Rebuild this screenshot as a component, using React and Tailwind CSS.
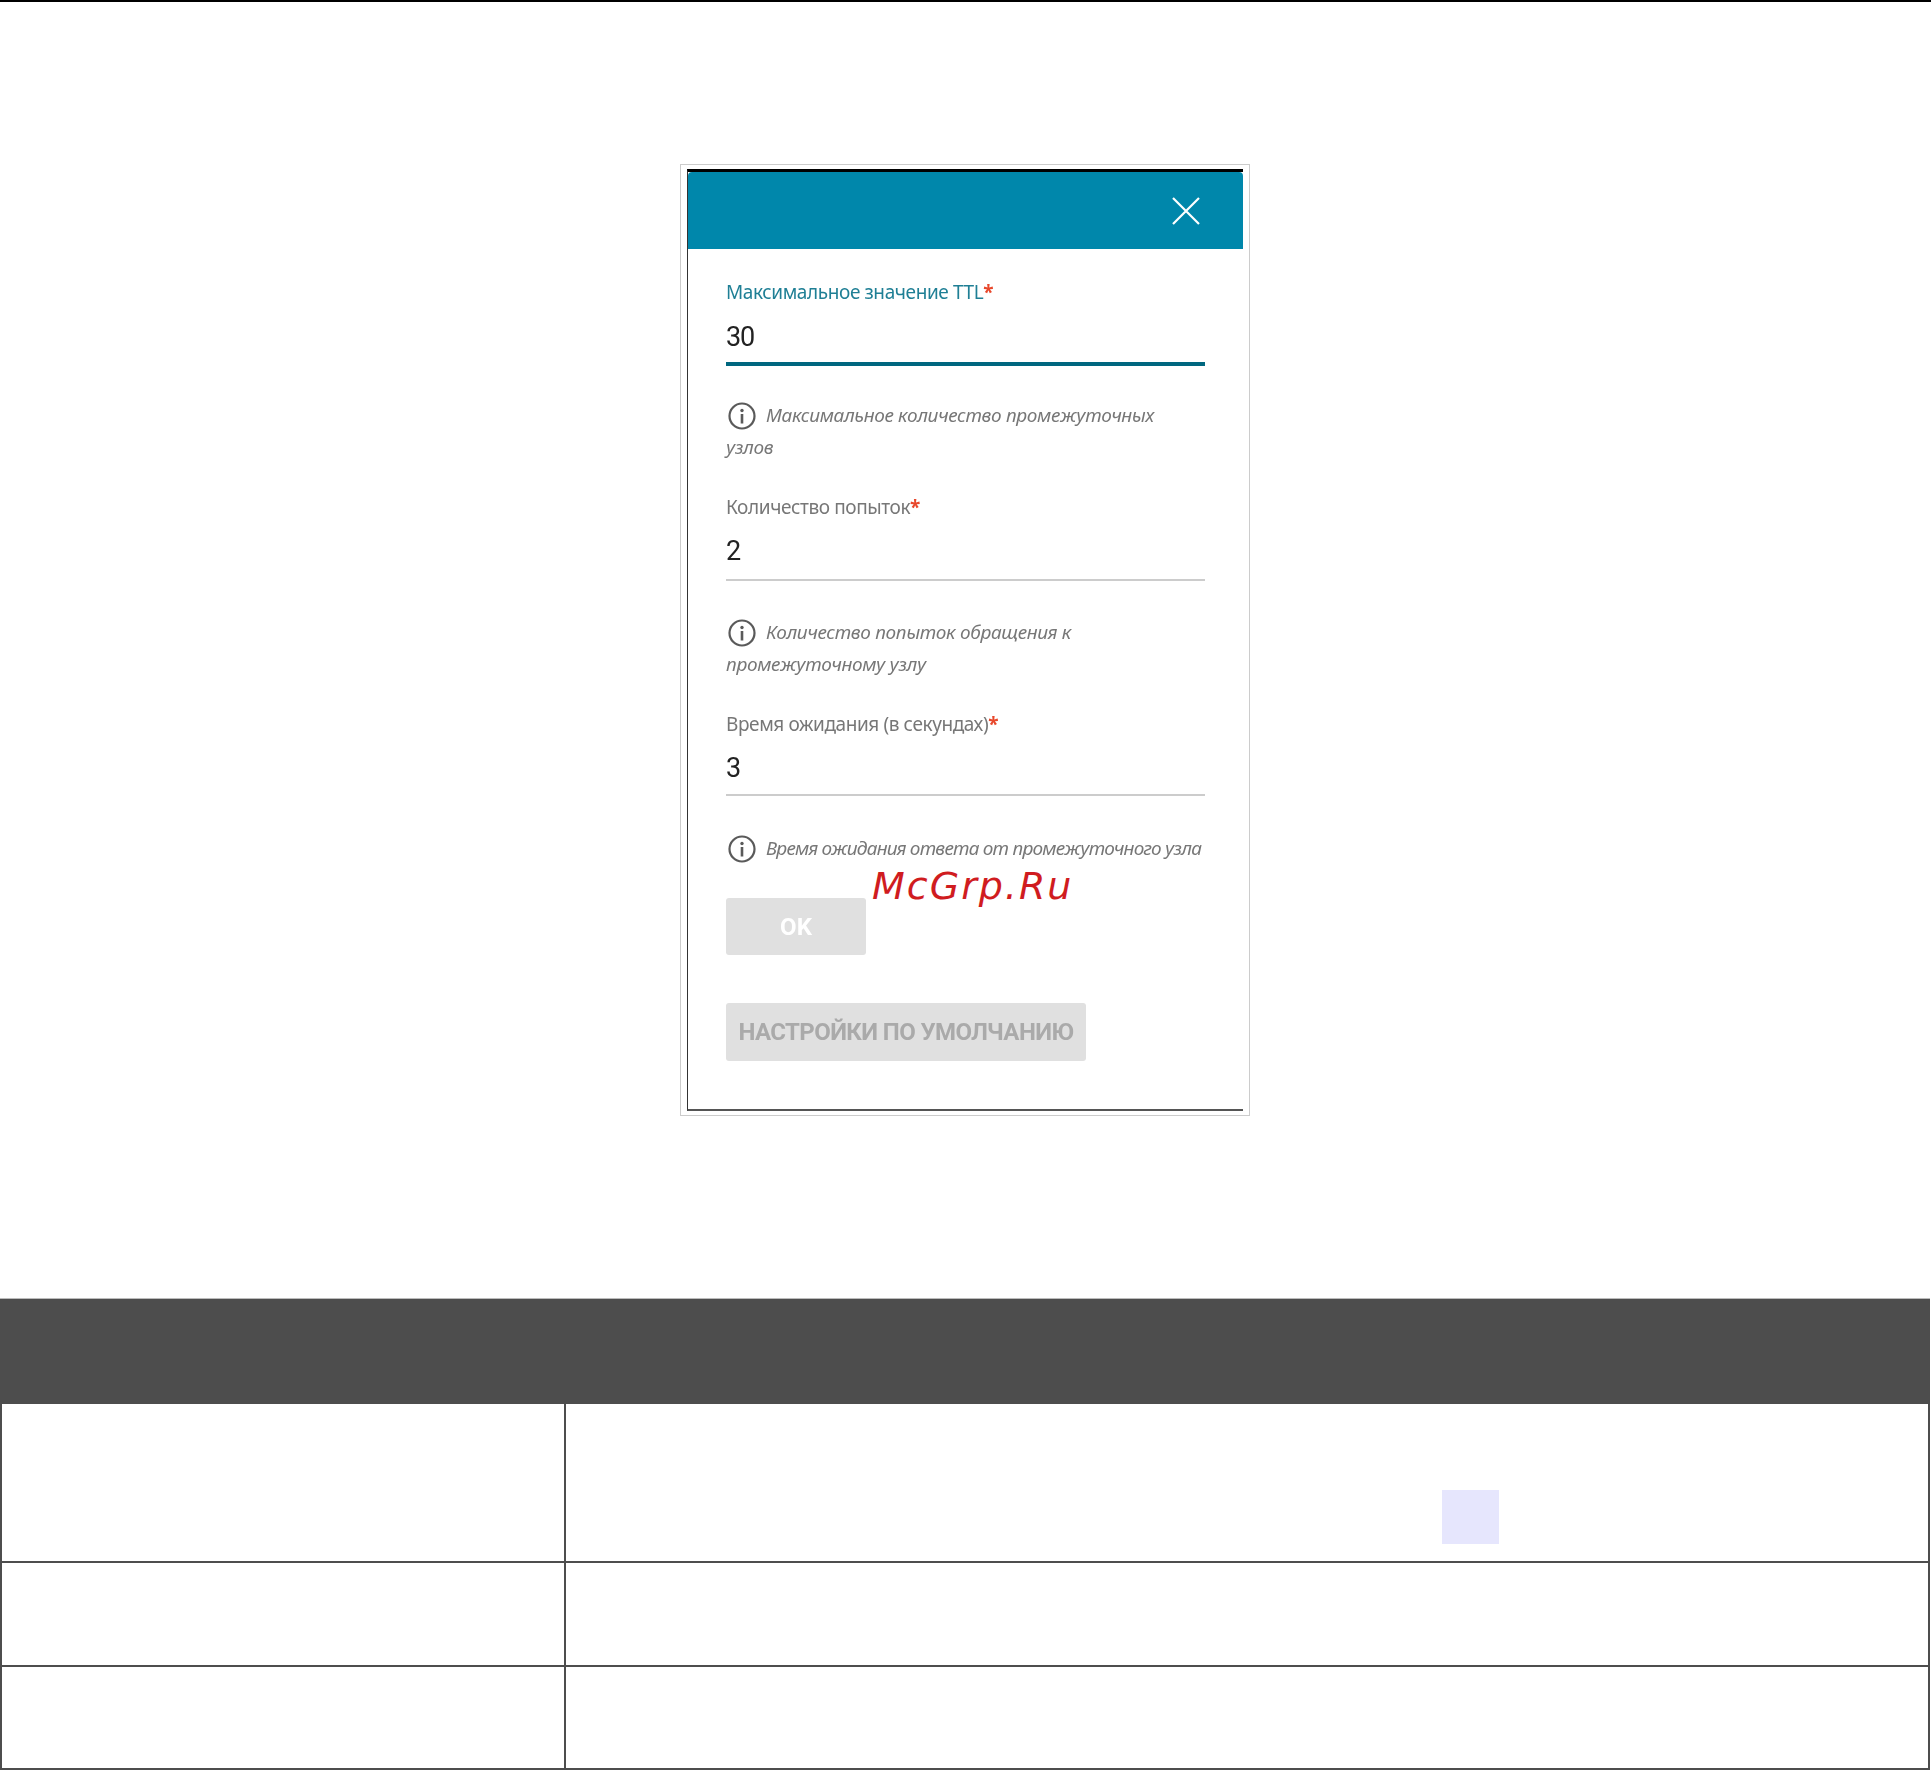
import React from 'react';

const InfoIcon = () => (
    <svg width="30" height="30" viewBox="0 0 30 30" fill="none" className="inline-block align-middle mr-[9px] ml-[1px] -mt-[3px] translate-y-[1px]">
        <circle cx="15" cy="15" r="12.5" stroke="#5a5a5a" strokeWidth="2.2" />
        <circle cx="15" cy="9.5" r="1.7" fill="#5a5a5a" />
        <rect x="13.7" y="13" width="2.6" height="9.5" fill="#5a5a5a" />
    </svg>
);

// One labelled input with its hint below; the gaps differ slightly per field
const Field = ({ label, value, hint, active, valueGap, lineGap, hintGap, hintClass = 'tracking-[-0.35px]' }) => (
    <div>
        <div className={`h-[30px] leading-[30px] text-[19px] tracking-[-0.4px] font-['Noto_Sans',sans-serif] ${active ? 'text-[#1f7f95]' : 'text-[#777777]'}`}>
            {label}<span className="text-[#e8482c] font-bold">*</span>
        </div>
        <div className={`h-[30px] leading-[30px] text-[27px] tracking-[-1.2px] text-[#222222] font-['Roboto',sans-serif] ${valueGap}`}>{value}</div>
        <div className={`${active ? 'h-[4px] bg-[#00677f]' : 'h-[2px] bg-[#cccccc]'} ${lineGap}`} />
        <div className={`leading-[32px] text-[19px] italic text-[#777777] font-['Noto_Sans',sans-serif] ${hintGap} ${hintClass}`}>
            <InfoIcon />{hint}
        </div>
    </div>
);

const Dialog = () => (
    <div className="relative w-[570px] h-[952px] ml-[680px] border border-[#cccccc] pt-[4px] px-[6px] pb-[4px]">
        <div className="h-full border-l border-t-[3px] border-b-2 border-l-[#333333] border-t-black border-b-[#555555]">
            <div className="h-[77px] bg-[#0087ab] rounded-t-[4px] flex items-center justify-end pr-[42px]">
                <svg width="30" height="30" viewBox="0 0 30 30" fill="none">
                    <path d="M2 2L28 28M28 2L2 28" stroke="#ffffff" strokeWidth="2.2" />
                </svg>
            </div>
            <div className="pt-[28px] pl-[38px] pr-[38px] flex flex-col blur-[0.5px]">
                <Field active label="Максимальное значение TTL" value="30" valueGap="mt-[15px]" lineGap="mt-[10px]" hintGap="mt-[33px]" hint="Максимальное количество промежуточных узлов" />
                <div className="mt-[29px]">
                    <Field label="Количество попыток" value="2" valueGap="mt-[14px]" lineGap="mt-[13px]" hintGap="mt-[35px]" hint="Количество попыток обращения к промежуточному узлу" />
                </div>
                <div className="mt-[29px]">
                    <Field label="Время ожидания (в секундах)" value="3" valueGap="mt-[14px]" lineGap="mt-[11px]" hintGap="mt-[36px]" hint="Время ожидания ответа от промежуточного узла" hintClass="tracking-[-0.78px] whitespace-nowrap" />
                </div>
                <button type="button" className="mt-[34px] w-[140px] h-[57px] rounded-[3px] bg-[#e0e0e0] text-white text-[24px] font-bold font-['Roboto',sans-serif]">OK</button>
                <button type="button" className="mt-[48px] w-[360px] h-[58px] rounded-[3px] bg-[#e0e0e0] text-[#aaaaaa] text-[24px] font-bold tracking-[-0.6px] whitespace-nowrap font-['Roboto',sans-serif]">НАСТРОЙКИ ПО УМОЛЧАНИЮ</button>
            </div>
        </div>
        {/* watermark sits over the dialog */}
        <div className="absolute left-[191px] top-[699px] text-[38px] leading-[44px] italic tracking-[2px] text-[#d01c1f] font-['DejaVu_Sans',sans-serif]">McGrp.Ru</div>
    </div>
);

const Row = ({ height, children }) => (
    <div className="flex border-b-2 border-[#4d4d4d]" style={{ height }}>
        <div className="w-[564px] shrink-0 border-r-2 border-[#4d4d4d]" />
        <div className="flex-1">{children}</div>
    </div>
);

const App = () => (
    <div className="w-[1931px] h-[1771px] bg-white overflow-hidden">
        <div className="h-[2px] bg-black" />
        <div className="mt-[162px]">
            <Dialog />
        </div>
        <div className="mt-[182px] w-[1930px] border-t border-[#bbbbbb]">
            <div className="h-[105px] bg-[#4d4d4d]" />
            <div className="border-l-2 border-r-2 border-[#4d4d4d]">
                <Row height={159}>
                    <div className="ml-[876px] mt-[86px] w-[57px] h-[54px] bg-[#e6e6fd]" />
                </Row>
                <Row height={104} />
                <Row height={103} />
            </div>
        </div>
    </div>
);

export default App;
